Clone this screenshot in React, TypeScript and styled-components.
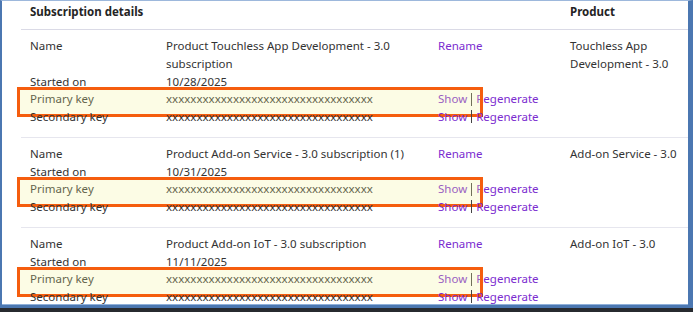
import React from "react";
import styled, { createGlobalStyle } from "styled-components";

const GlobalStyle = createGlobalStyle`
  html, body { margin: 0; padding: 0; background: #ffffff; }
  body { font-family: "Noto Sans", "Open Sans", sans-serif; font-size: 11.5px; color: #333333; }
  * { box-sizing: border-box; }
`;

const Outer = styled.div`
  width: 693px;
  height: 312px;
  border-bottom: 4px solid #272a2f;
`;

const Frame = styled.div`
  height: 100%;
  border-top: 1px solid #9db8dc;
  border-left: 2px solid #4b77b1;
  border-right: 5px solid #4b77b1;
  border-bottom: 3px solid #4b77b1;
  box-shadow: inset 0 -1px 0 #8fb0da;
  background: #ffffff;
  overflow: hidden;
`;

const Header = styled.div`
  margin-left: 19px;
  padding: 2px 0 0 9px;
  height: 29px;
  display: grid;
  grid-template-columns: 540px 1fr;
  border-bottom: 1px solid #dadae6;
  font-weight: 700;
  color: #242424;
  line-height: 18px;
`;

const Block = styled.div<{ $last?: boolean }>`
  margin-left: 19px;
  padding: 7px 0 ${(p) => (p.$last ? 0 : 11)}px 9px;
  display: flex;
  border-bottom: ${(p) => (p.$last ? "none" : "1px solid #e6e6ee")};
`;

const Details = styled.div`
  width: 540px;
  display: flex;
  flex-direction: column;
`;

const Line = styled.div<{ $highlight?: boolean }>`
  position: relative;
  display: grid;
  grid-template-columns: 136px 272px 132px;
  align-items: start;
  line-height: 17.75px;
  &::after {
    content: "";
    display: ${(p) => (p.$highlight ? "block" : "none")};
    position: absolute;
    left: -13px;
    top: -3px;
    width: 460px;
    height: 24px;
    border: 3px solid #f55d0e;
    background: rgba(245, 245, 150, 0.25);
    pointer-events: none;
  }
`;

const Label = styled.div`
  color: #333333;
`;

const Value = styled.div`
  color: #333333;
  padding-right: 8px;
`;

const KeyValue = styled.div`
  color: #333333;
  white-space: nowrap;
`;

const Actions = styled.div`
  display: flex;
  align-items: center;
  height: 17.75px;
  white-space: nowrap;
`;

const Link = styled.span`
  color: #7b2ccf;
`;

const Divider = styled.span`
  display: inline-block;
  width: 1px;
  height: 13px;
  background: #444444;
  margin: 0 4px;
`;

const Product = styled.div`
  width: 118px;
  line-height: 17.75px;
  color: #333333;
`;

type Sub = {
  name: string;
  started: string;
  product: string;
};

const subs: Sub[] = [
  {
    name: "Product Touchless App Development - 3.0 subscription",
    started: "10/28/2025",
    product: "Touchless App Development - 3.0",
  },
  {
    name: "Product Add-on Service - 3.0 subscription (1)",
    started: "10/31/2025",
    product: "Add-on Service - 3.0",
  },
  {
    name: "Product Add-on IoT - 3.0 subscription",
    started: "11/11/2025",
    product: "Add-on IoT - 3.0",
  },
];

const KEY = "x".repeat(34);

const KeyActions = () => (
  <Actions>
    <Link>Show</Link>
    <Divider />
    <Link>Regenerate</Link>
  </Actions>
);

export default function App() {
  return (
    <>
      <GlobalStyle />
      <Outer>
        <Frame>
          <Header>
            <div>Subscription details</div>
            <div>Product</div>
          </Header>
          {subs.map((s, i) => (
            <Block key={s.name} $last={i === subs.length - 1}>
              <Details>
                <Line>
                  <Label>Name</Label>
                  <Value>{s.name}</Value>
                  <Actions>
                    <Link>Rename</Link>
                  </Actions>
                </Line>
                <Line>
                  <Label>Started on</Label>
                  <Value>{s.started}</Value>
                </Line>
                <Line $highlight>
                  <Label>Primary key</Label>
                  <KeyValue>{KEY}</KeyValue>
                  <KeyActions />
                </Line>
                <Line>
                  <Label>Secondary key</Label>
                  <KeyValue>{KEY}</KeyValue>
                  <KeyActions />
                </Line>
              </Details>
              <Product>{s.product}</Product>
            </Block>
          ))}
        </Frame>
      </Outer>
    </>
  );
}
